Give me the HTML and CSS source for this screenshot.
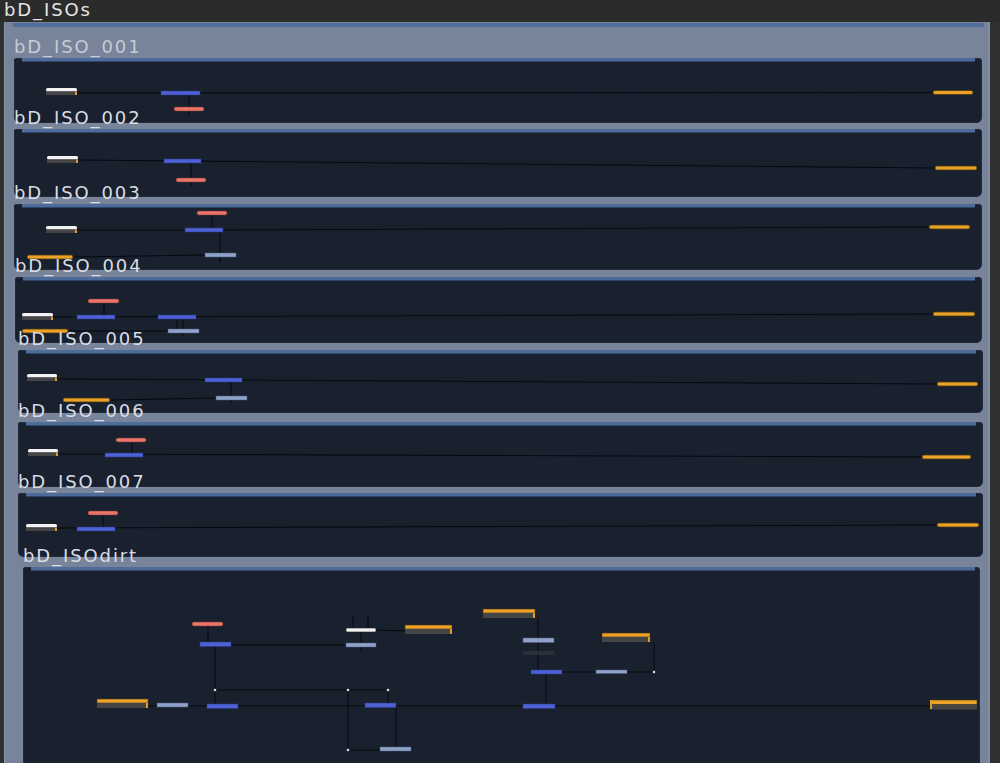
FILE: index.html
```html
<!DOCTYPE html>
<html>
<head>
<meta charset="utf-8">
<title>bD_ISOs</title>
<link rel="stylesheet" href="styles.css">
</head>
<body>
<div class="titlebar">bD_ISOs</div>
<div class="outer">
  <div class="outer-bar"></div>

  <div class="panel p1">
    <span class="label label-dim">bD_ISO_001</span>
    <div class="panel-bar"></div>
    <svg class="canvas" width="968" height="65" viewBox="14 58 968 65">
      <line class="wire" x1="77" y1="93" x2="933" y2="92.5"/>
      <line class="wire" x1="189" y1="95" x2="189" y2="115"/>
      <rect class="n-white" x="46" y="88" width="31" height="3.5" rx="1.5"/><rect class="n-base" x="46" y="91.5" width="31" height="3.5"/><rect class="n-tip" x="75" y="91.5" width="2" height="3.5"/>
      <rect class="n-blue" x="161" y="91" width="39" height="4"/>
      <rect class="n-red" x="174" y="107" width="30" height="4" rx="2"/>
      <rect class="n-orange" x="933" y="90.5" width="40" height="4" rx="2"/>
    </svg>
  </div>

  <div class="panel p2">
    <span class="label">bD_ISO_002</span>
    <div class="panel-bar"></div>
    <svg class="canvas" width="968" height="68" viewBox="14 129 968 68">
      <line class="wire" x1="78" y1="160" x2="935" y2="168"/>
      <line class="wire" x1="191" y1="163" x2="191" y2="186"/>
      <rect class="n-white" x="47" y="156" width="31" height="3.5" rx="1.5"/><rect class="n-base" x="47" y="159.5" width="31" height="3.5"/><rect class="n-tip" x="76" y="159.5" width="2" height="3.5"/>
      <rect class="n-blue" x="164" y="159" width="37" height="4"/>
      <rect class="n-red" x="176" y="178" width="30" height="4" rx="2"/>
      <rect class="n-orange" x="935" y="166" width="42" height="4" rx="2"/>
    </svg>
  </div>

  <div class="panel p3">
    <span class="label">bD_ISO_003</span>
    <div class="panel-bar"></div>
    <svg class="canvas" width="968" height="66" viewBox="14 204 968 66">
      <line class="wire" x1="77" y1="230" x2="185" y2="230"/>
      <line class="wire" x1="223" y1="230" x2="929" y2="227"/>
      <line class="wire" x1="212" y1="215" x2="212" y2="228"/>
      <line class="wire" x1="220" y1="232" x2="220" y2="260"/>
      <line class="wire" x1="73" y1="257" x2="205" y2="255"/>
      <rect class="n-red" x="197" y="211" width="30" height="4" rx="2"/>
      <rect class="n-white" x="46" y="226" width="31" height="3.5" rx="1.5"/><rect class="n-base" x="46" y="229.5" width="31" height="3.5"/><rect class="n-tip" x="75" y="229.5" width="2" height="3.5"/>
      <rect class="n-blue" x="185" y="228" width="38" height="4"/>
      <rect class="n-orange" x="929" y="225" width="41" height="4" rx="2"/>
      <rect class="n-light" x="205" y="253" width="31" height="4"/>
      <rect class="n-orange" x="27" y="255" width="46" height="4" rx="2"/>
      <circle class="dot-dark" cx="220" cy="260" r="1.2"/>
    </svg>
  </div>

  <div class="panel p4">
    <span class="label">bD_ISO_004</span>
    <div class="panel-bar"></div>
    <svg class="canvas" width="967" height="66" viewBox="15 277 967 66">
      <line class="wire" x1="53" y1="317" x2="933" y2="314"/>
      <line class="wire" x1="104" y1="303" x2="104" y2="315"/>
      <line class="wire" x1="68" y1="331" x2="168" y2="331"/>
      <line class="wire" x1="177" y1="320" x2="177" y2="329"/>
      <line class="wire" x1="183" y1="320" x2="183" y2="336"/>
      <rect class="n-red" x="88" y="299" width="31" height="4" rx="2"/>
      <rect class="n-white" x="22" y="313" width="31" height="3.5" rx="1.5"/><rect class="n-base" x="22" y="316.5" width="31" height="3.5"/><rect class="n-tip" x="51" y="316.5" width="2" height="3.5"/>
      <rect class="n-blue" x="77" y="315" width="38" height="4"/>
      <rect class="n-blue" x="158" y="315" width="38" height="4"/>
      <rect class="n-orange" x="933" y="312" width="42" height="4" rx="2"/>
      <rect class="n-light" x="168" y="329" width="31" height="4"/>
      <rect class="n-orange" x="22" y="329" width="46" height="4" rx="2"/>
    </svg>
  </div>

  <div class="panel p5">
    <span class="label">bD_ISO_005</span>
    <div class="panel-bar"></div>
    <svg class="canvas" width="965" height="63" viewBox="18 350 965 63">
      <line class="wire" x1="57" y1="379" x2="937" y2="384"/>
      <line class="wire" x1="110" y1="400" x2="216" y2="398"/>
      <line class="wire" x1="231" y1="382" x2="231" y2="403"/>
      <rect class="n-white" x="27" y="374" width="30" height="3.5" rx="1.5"/><rect class="n-base" x="27" y="377.5" width="30" height="3.5"/><rect class="n-tip" x="55" y="377.5" width="2" height="3.5"/>
      <rect class="n-blue" x="205" y="378" width="37" height="4"/>
      <rect class="n-orange" x="937" y="382" width="41" height="4" rx="2"/>
      <rect class="n-orange" x="63" y="398" width="47" height="4" rx="2"/>
      <rect class="n-light" x="216" y="396" width="31" height="4"/>
    </svg>
  </div>

  <div class="panel p6">
    <span class="label">bD_ISO_006</span>
    <div class="panel-bar"></div>
    <svg class="canvas" width="965" height="65" viewBox="18 422 965 65">
      <line class="wire" x1="58" y1="454" x2="922" y2="457"/>
      <line class="wire" x1="132" y1="442" x2="132" y2="453"/>
      <rect class="n-red" x="116" y="438" width="30" height="4" rx="2"/>
      <rect class="n-white" x="28" y="449" width="30" height="3.5" rx="1.5"/><rect class="n-base" x="28" y="452.5" width="30" height="3.5"/><rect class="n-tip" x="56" y="452.5" width="2" height="3.5"/>
      <rect class="n-blue" x="105" y="453" width="38" height="4"/>
      <rect class="n-orange" x="922" y="455" width="49" height="4" rx="2"/>
    </svg>
  </div>

  <div class="panel p7">
    <span class="label">bD_ISO_007</span>
    <div class="panel-bar"></div>
    <svg class="canvas" width="965" height="64" viewBox="18 493 965 64">
      <line class="wire" x1="57" y1="528" x2="937" y2="525"/>
      <line class="wire" x1="103" y1="515" x2="103" y2="527"/>
      <rect class="n-red" x="88" y="511" width="30" height="4" rx="2"/>
      <rect class="n-white" x="26" y="524" width="31" height="3.5" rx="1.5"/><rect class="n-base" x="26" y="527.5" width="31" height="3.5"/><rect class="n-tip" x="55" y="527.5" width="2" height="3.5"/>
      <rect class="n-blue" x="77" y="527" width="38" height="4"/>
      <rect class="n-orange" x="937" y="523" width="42" height="4" rx="2"/>
    </svg>
  </div>

  <div class="panel p8">
    <span class="label">bD_ISOdirt</span>
    <div class="panel-bar"></div>
    <svg class="canvas" width="957" height="200" viewBox="23 567 957 200">
      <line class="wire" x1="148" y1="706" x2="930" y2="706"/>
      <line class="wire" x1="208" y1="626" x2="208" y2="642"/>
      <line class="wire" x1="231" y1="645" x2="346" y2="645"/>
      <line class="wire" x1="215" y1="647" x2="215" y2="704"/>
      <line class="wire" x1="215" y1="690" x2="388" y2="690"/>
      <line class="wire" x1="348" y1="690" x2="348" y2="750"/>
      <line class="wire" x1="348" y1="750" x2="380" y2="750"/>
      <line class="wire" x1="396" y1="708" x2="396" y2="747"/>
      <line class="wire" x1="388" y1="690" x2="388" y2="703"/>
      <line class="wire" x1="353" y1="615" x2="353" y2="628"/>
      <line class="wire" x1="368" y1="615" x2="368" y2="628"/>
      <line class="wire" x1="361" y1="632" x2="361" y2="651"/>
      <line class="wire" x1="376" y1="630" x2="406" y2="631"/>
      <line class="wire" x1="538" y1="618" x2="538" y2="670"/>
      <line class="wire" x1="562" y1="672" x2="654" y2="672"/>
      <line class="wire" x1="654" y1="642" x2="654" y2="672"/>
      <line class="wire" x1="546" y1="674" x2="546" y2="704"/>
      <rect class="n-red" x="192" y="622" width="31" height="4" rx="2"/>
      <rect class="n-blue" x="200" y="642" width="31" height="4.5"/>
      <rect class="n-big" x="97" y="699" width="51" height="4"/><rect class="n-base" x="97" y="703" width="51" height="5"/><rect class="n-tip" x="146" y="703" width="2" height="5"/>
      <rect class="n-light" x="157" y="703" width="31" height="4"/>
      <rect class="n-blue" x="207" y="704" width="31" height="4.5"/>
      <rect class="n-blue" x="365" y="703" width="31" height="4.5"/>
      <rect class="n-light" x="380" y="747" width="31" height="4"/>
      <rect class="n-white2" x="346" y="628" width="30" height="4" rx="1.5"/>
      <rect class="n-light" x="346" y="643" width="30" height="4"/>
      <rect class="n-big" x="405" y="625" width="47" height="4"/><rect class="n-base" x="405" y="629" width="47" height="5"/><rect class="n-tip" x="450" y="629" width="2" height="5"/>
      <rect class="n-big" x="483" y="609" width="52" height="4"/><rect class="n-base" x="483" y="613" width="52" height="5"/><rect class="n-tip" x="533" y="613" width="2" height="5"/>
      <rect class="n-light" x="523" y="638" width="31" height="4.5"/>
      <rect class="n-dark" x="523" y="651" width="31" height="4"/>
      <rect class="n-blue" x="531" y="670" width="31" height="4"/>
      <rect class="n-light" x="596" y="670" width="31" height="3.5"/>
      <rect class="n-big" x="602" y="633" width="48" height="4"/><rect class="n-base" x="602" y="637" width="48" height="5"/><rect class="n-tip" x="648" y="637" width="2" height="5"/>
      <rect class="n-blue" x="523" y="704" width="32" height="4.5"/>
      <rect class="n-big" x="930" y="700" width="47" height="4.5"/><rect class="n-base" x="930" y="704.5" width="47" height="5"/><rect class="n-tip" x="930" y="700" width="2" height="9"/>
      <circle class="dot" cx="215" cy="690" r="1.3"/>
      <circle class="dot" cx="348" cy="690" r="1.3"/>
      <circle class="dot" cx="388" cy="690" r="1.3"/>
      <circle class="dot" cx="348" cy="750" r="1.3"/>
      <circle class="dot" cx="654" cy="672" r="1.3"/>
    </svg>
  </div>
</div>
</body>
</html>
```
FILE: styles.css
```css
html, body {
  margin: 0;
  padding: 0;
  height: 763px;
  overflow: hidden;
}

body {
  background: #303030;
  font-family: "DejaVu Sans", Verdana, sans-serif;
}

.titlebar {
  height: 22px;
  box-sizing: border-box;
  padding-left: 4px;
  font-size: 18px;
  line-height: 20px;
  letter-spacing: 1.9px;
  color: #e4e4e4;
  background: #2b2b2b;
}

.outer {
  margin-left: 4px;
  width: 986px;
  height: 741px;
  box-sizing: border-box;
  padding-top: 1px;
  background: #77849a;
  border-left: 1px solid #8894a8;
  border-right: 2px solid #8390a4;
  overflow: hidden;
}

.outer-bar {
  height: 4px;
  margin: 0 4px 0 8px;
  background: #4f6c9a;
  border-radius: 0 2px 0 0;
}

.panel {
  position: relative;
  background: #19212f;
  border-radius: 3px 4px 6px 6px;
  box-shadow: inset 0 0 0 1px #222b3a;
}

.panel-bar {
  height: 4px;
  margin: 0 7px 0 8px;
  background: #4e6b99;
  border-bottom: 1px solid #2f4466;
  box-sizing: border-box;
}

.label {
  position: absolute;
  left: 0;
  top: -21px;
  font-size: 18px;
  line-height: 20px;
  letter-spacing: 1.9px;
  color: #d9dde4;
  white-space: nowrap;
  z-index: 2;
}

.label-dim {
  color: #c6ccd6;
}

.canvas {
  position: absolute;
  left: 0;
  top: 0;
  display: block;
}

.p1 { margin: 31px 6px 0 9px; width: 968px; height: 65px; }
.p2 { margin: 6px 6px 0 9px; width: 968px; height: 68px; }
.p3 { margin: 7px 6px 0 9px; width: 968px; height: 66px; }
.p4 { margin: 7px 6px 0 10px; width: 967px; height: 66px; }
.p5 { margin: 7px 5px 0 13px; width: 965px; height: 63px; }
.p6 { margin: 9px 5px 0 13px; width: 965px; height: 65px; }
.p7 { margin: 6px 5px 0 13px; width: 965px; height: 64px; }
.p8 { margin: 10px 8px 0 18px; width: 957px; height: 200px; border-radius: 3px 4px 0 0; }
.p8 .panel-bar { margin: 1px 5px 0 8px; }

.wire { stroke: #06080c; stroke-width: 1; }
.dot { fill: #d8dbe0; }
.dot-dark { fill: #06080c; }

.n-blue { fill: #4d60d6; stroke: #2d3a80; stroke-width: 0.5; }
.n-red { fill: #ea7468; stroke: #7a3a35; stroke-width: 0.5; }
.n-orange { fill: #eaa229; stroke: #4a3512; stroke-width: 0.8; }
.n-light { fill: #8fa3ca; stroke: #4e5c78; stroke-width: 0.5; }
.n-white { fill: #f2f2f2; }
.n-white2 { fill: #f0f0f0; stroke: #222; stroke-width: 0.6; }
.n-base { fill: #454545; }
.n-tip { fill: #e09a2a; }
.n-big { fill: #eaa229; stroke: #4a3512; stroke-width: 0.6; }
.n-dark { fill: #2a3039; }
```
